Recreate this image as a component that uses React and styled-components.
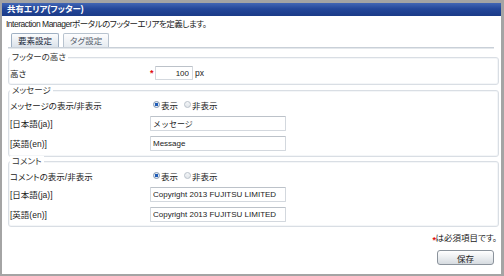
import React, { useState } from 'react';
import styled, { createGlobalStyle } from 'styled-components';

const GlobalStyle = createGlobalStyle`
  body {
    margin: 0;
    background: #ffffff;
    font-family: "Liberation Sans", "Noto Sans CJK JP", sans-serif;
    font-feature-settings: "palt";
    color: #222;
  }
`;

// outer window frame
const Frame = styled.div`
  width: 504px;
  height: 276px;
  box-sizing: border-box;
  border: 2px solid #a4a4a4;
  border-top-width: 3px;
  border-right-width: 3px;
  display: flex;
  flex-direction: column;
  overflow: hidden;
  background: #fff;
`;

const TitleBar = styled.div`
  height: 13px;
  line-height: 13px;
  padding-left: 5px;
  background: linear-gradient(#4266b4, #24479a 45%, #1b3b88);
  color: #ffffff;
  font-size: 8.5px;
  font-weight: bold;
`;

const Description = styled.div`
  height: 16px;
  line-height: 16px;
  padding-left: 4px;
  font-size: 8.5px;
  letter-spacing: -0.5px;
`;

const Body = styled.div`
  display: flex;
  flex-direction: column;
  padding: 0 2px 0 6px;
`;

const TabBar = styled.div`
  display: flex;
  gap: 4px;
  margin: 1px 5px 0 0;
  padding-left: 3px;
  border-bottom: 1px solid #c9d0d8;
  box-shadow: 0 1px 0 #e4e8ec;
`;

const Tab = styled.div`
  height: 14px;
  line-height: 14px;
  box-sizing: border-box;
  padding: 0 6px;
  border: 1px solid ${(p) => (p.$active ? '#9fb0c3' : '#b8c3cf')};
  border-bottom: none;
  border-radius: 2px 2px 0 0;
  background: ${(p) => (p.$active ? 'linear-gradient(#fbfcfd, #dbe2ea)' : 'linear-gradient(#fdfdfe, #e6ebf0)')};
  color: ${(p) => (p.$active ? '#1c2b3d' : '#5a6470')};
  font-size: 8.5px;
  cursor: pointer;
`;

const Group = styled.div`
  margin-top: ${(p) => p.$top}px;
  border: 1px solid #d9dee4;
  border-radius: 3px;
  padding: 0 1px ${(p) => p.$bottom}px 1px;
  box-shadow: inset 0 0 0 1px #f4f6f8;
`;

const Legend = styled.div`
  width: fit-content;
  margin-top: -6px;
  padding: 0 2px;
  height: 11px;
  line-height: 11px;
  background: #fff;
  font-size: 8.5px;
  color: #333;
`;

const Row = styled.div`
  display: grid;
  grid-template-columns: 140px 1fr;
  align-items: center;
  height: ${(p) => p.$h}px;
`;

const Label = styled.div`
  font-size: 8.5px;
  white-space: nowrap;
`;

const Control = styled.div`
  display: flex;
  align-items: center;
  font-size: 8.5px;
`;

const Required = styled.span`
  display: inline-block;
  width: ${(p) => (p.$tight ? 3 : 5)}px;
  color: #e01010;
  font-size: 9px;
  font-weight: bold;
  line-height: 6px;
  vertical-align: -2px;
  overflow: visible;
`;

const TextInput = styled.input`
  box-sizing: border-box;
  width: ${(p) => p.$w || 136}px;
  height: ${(p) => p.$hgt || 15}px;
  margin: 0;
  padding: ${(p) => (p.$right ? '0 3px 0 0' : '0 2px')};
  border: 1px solid #d3d8de;
  border-top-color: #bcc2c9;
  border-radius: 1px;
  font-family: inherit;
  font-size: 8px;
  color: #222;
  text-align: ${(p) => (p.$right ? 'right' : 'left')};
  outline: none;
  background: #fff;
`;

const Unit = styled.span`
  margin-left: 2px;
  font-size: 8.5px;
`;

const RadioGroup = styled.div`
  display: flex;
  align-items: center;
  padding-left: 3px;
`;

const RadioOption = styled.label`
  display: flex;
  align-items: center;
  gap: 1px;
  margin-right: 6px;
  font-size: 8.5px;
  cursor: pointer;
`;

const RadioDot = styled.span`
  width: 7px;
  height: 7px;
  box-sizing: border-box;
  border-radius: 50%;
  border: 1px solid ${(p) => (p.$on ? '#8094ad' : '#b9c1ca')};
  background: ${(p) =>
    p.$on
      ? 'radial-gradient(circle, #1f5cb8 0 1.6px, #e6edf5 1.8px)'
      : 'linear-gradient(#f4f6f8, #e2e6ea)'};
`;

const Footnote = styled.div`
  align-self: flex-end;
  margin: 6px 2px 0 0;
  height: 11px;
  line-height: 11px;
  font-size: 8.5px;
`;

const SaveButton = styled.button`
  align-self: flex-end;
  margin: 6px 5px 0 0;
  width: 57px;
  height: 15px;
  padding: 0;
  border: 1px solid #8b939c;
  border-radius: 3px;
  background: linear-gradient(#ffffff, #e9ecef 55%, #d6dbe0);
  font-family: inherit;
  font-size: 8.5px;
  color: #222;
  cursor: pointer;
`;

const Radio = ({ value, onChange }) => (
  <RadioGroup>
    <RadioOption onClick={() => onChange(true)}>
      <RadioDot $on={value} />
      表示
    </RadioOption>
    <RadioOption onClick={() => onChange(false)}>
      <RadioDot $on={!value} />
      非表示
    </RadioOption>
  </RadioGroup>
);

export default function App() {
  const [tab, setTab] = useState(0);
  const [showMessage, setShowMessage] = useState(true);
  const [showComment, setShowComment] = useState(true);

  return (
    <>
      <GlobalStyle />
      <Frame>
        <TitleBar>共有エリア(フッター)</TitleBar>
        <Description>Interaction Managerポータルのフッターエリアを定義します。</Description>
        <Body>
          <TabBar>
            <Tab $active={tab === 0} onClick={() => setTab(0)}>要素設定</Tab>
            <Tab $active={tab === 1} onClick={() => setTab(1)}>タグ設定</Tab>
          </TabBar>

          <Group $top={9} $bottom={1}>
            <Legend>フッターの高さ</Legend>
            <Row $h={20}>
              <Label>高さ</Label>
              <Control>
                <Required>*</Required>
                <TextInput $w={38} $hgt={14} $right defaultValue="100" />
                <Unit>px</Unit>
              </Control>
            </Row>
          </Group>

          <Group $top={5} $bottom={3}>
            <Legend>メッセージ</Legend>
            <Row $h={17}>
              <Label>メッセージの表示/非表示</Label>
              <Radio value={showMessage} onChange={setShowMessage} />
            </Row>
            <Row $h={20}>
              <Label>[日本語(ja)]</Label>
              <Control>
                <TextInput defaultValue="メッセージ" />
              </Control>
            </Row>
            <Row $h={20}>
              <Label>[英語(en)]</Label>
              <Control>
                <TextInput defaultValue="Message" />
              </Control>
            </Row>
          </Group>

          <Group $top={4} $bottom={2}>
            <Legend>コメント</Legend>
            <Row $h={17}>
              <Label>コメントの表示/非表示</Label>
              <Radio value={showComment} onChange={setShowComment} />
            </Row>
            <Row $h={20}>
              <Label>[日本語(ja)]</Label>
              <Control>
                <TextInput defaultValue="Copyright 2013 FUJITSU LIMITED" />
              </Control>
            </Row>
            <Row $h={20}>
              <Label>[英語(en)]</Label>
              <Control>
                <TextInput defaultValue="Copyright 2013 FUJITSU LIMITED" />
              </Control>
            </Row>
          </Group>

          <Footnote>
            <Required $tight>*</Required>は必須項目です。
          </Footnote>
          <SaveButton>保存</SaveButton>
        </Body>
      </Frame>
    </>
  );
}
